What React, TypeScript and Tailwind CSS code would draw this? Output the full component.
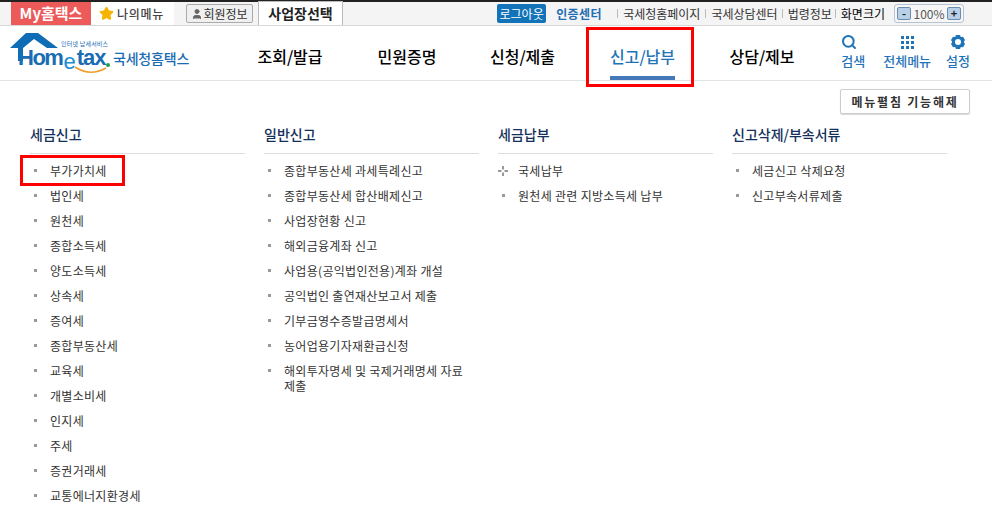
import React from 'react';
import { Search, Star, User } from 'lucide-react';

const columns = [
    {
        title: '세금신고',
        items: ['부가가치세', '법인세', '원천세', '종합소득세', '양도소득세', '상속세', '증여세', '종합부동산세', '교육세', '개별소비세', '인지세', '주세', '증권거래세', '교통에너지환경세'],
    },
    {
        title: '일반신고',
        items: ['종합부동산세 과세특례신고', '종합부동산세 합산배제신고', '사업장현황 신고', '해외금융계좌 신고', '사업용(공익법인전용)계좌 개설', '공익법인 출연재산보고서 제출', '기부금영수증발급명세서', '농어업용기자재환급신청', '해외투자명세 및 국제거래명세 자료 제출'],
    },
    {
        title: '세금납부',
        items: ['국세납부', '원천세 관련 지방소득세 납부'],
    },
    {
        title: '신고삭제/부속서류',
        items: ['세금신고 삭제요청', '신고부속서류제출'],
    },
];

const navItems = [
    { label: '조회/발급', width: 'w-[118px]' },
    { label: '민원증명', width: 'w-[116px]' },
    { label: '신청/제출', width: 'w-[115px]' },
    { label: '신고/납부', width: 'w-[125px]' },
    { label: '상담/제보', width: 'w-[114px]' },
];

function Logo() {
    return (
        <div className="relative w-[190px] h-[50px] ml-[10px] shrink-0">
            <svg width="50" height="30" viewBox="0 0 50 30" className="absolute left-0 top-[7px]">
                <path d="M0 15 L16 0 L28 0 L48 15 L37 15 L24 6 L13 15 L13 28 L8 28 L8 15 Z" fill="#0f6db5" />
            </svg>
            <div className="absolute left-[8px] top-[23px] text-[22px] leading-[18px] font-bold text-[#1a6cb3] font-['Liberation_Sans',sans-serif] flex whitespace-nowrap">
                <span className="tracking-[-1.5px]">Hom</span>
                <span className="font-normal text-[#1a8ccf] mt-[4px] ml-[1px]">e</span>
                <span className="tracking-[-1px] ml-[1px]">tax</span>
            </div>
            <div className="absolute left-[51px] top-[14px] text-[6px] leading-[8px] tracking-[0.2px] text-[#1a6cb3] whitespace-nowrap">인터넷 납세서비스</div>
            <span className="absolute left-[96px] top-[37px] w-[4px] h-[4px] rounded-full bg-[#1e9e4a]" />
            <svg width="34" height="10" viewBox="0 0 34 10" className="absolute left-[64px] top-[40px]">
                <path d="M1 1 Q16 11 32 2" fill="none" stroke="#f0a030" strokeWidth="1.6" />
            </svg>
            <div className="absolute left-[103px] top-[22px] text-[14px] leading-[20px] font-medium text-[#1a6cb3] tracking-[-0.2px] whitespace-nowrap">국세청홈택스</div>
        </div>
    );
}

function TopBar() {
    return (
        <div className="h-[26px] border-t-2 border-t-[#222] border-b border-b-[#d8d8d8] bg-[#f4f4f4] flex items-stretch text-[12px] text-[#333] shrink-0">
            <div className="ml-[11px] w-[80px] bg-[#ec5a5a] text-white font-bold text-[15px] flex items-center justify-center">My홈택스</div>
            <div className="w-[83px] bg-white flex items-center pl-[8px] gap-[3px] font-medium text-[#444] tracking-[0.7px]">
                <Star size={15} fill="#f5b400" stroke="#f5b400" />
                <span>나의메뉴</span>
            </div>
            <div className="ml-[12px] my-[2px] w-[67px] border border-[#aaa] rounded-[2px] bg-[#f0f0f0] flex items-center justify-center">
                <User size={12} fill="#666" stroke="#666" />
                <span>회원정보</span>
            </div>
            <div className="ml-[5px] mt-[-1px] w-[85px] border border-[#bbb] border-b-0 bg-white flex items-center justify-center font-bold text-[14px] text-[#222]">사업장선택</div>
            <div className="ml-auto flex items-center pr-[28px]">
                <div className="w-[49px] h-[19px] bg-[#1273b8] rounded-[2px] text-white flex items-center justify-center">로그아웃</div>
                <div className="ml-[10px] w-[49px] font-bold text-[#1f6fb2] tracking-[0.4px]">인증센터</div>
                <div className="ml-[12px] flex items-center gap-[5px]">
                    <i className="w-px h-[9px] bg-[#bbb]" />
                    <span>국세청홈페이지</span>
                    <i className="w-px h-[9px] bg-[#bbb]" />
                    <span>국세상담센터</span>
                    <i className="w-px h-[9px] bg-[#bbb] ml-[-1px]" />
                    <span>법령정보</span>
                    <i className="w-px h-[9px] bg-[#bbb] ml-[-2px]" />
                    <span className="text-black">화면크기</span>
                </div>
                <div className="ml-[9px] w-[70px] h-[19px] border border-[#b5c4d4] rounded-[3px] bg-[#f6f6f6] flex items-center justify-between px-[2px] text-[#555]">
                    <span className="w-[14px] h-[13px] bg-[#b8d0e8] border border-[#6c8cab] rounded-[2px] flex items-center justify-center leading-none text-[11px] font-bold text-[#222]">-</span>
                    <span className="text-[12px]">100%</span>
                    <span className="w-[14px] h-[13px] bg-[#b8d0e8] border border-[#6c8cab] rounded-[2px] flex items-center justify-center leading-none text-[11px] font-bold text-[#222]">+</span>
                </div>
            </div>
        </div>
    );
}

function Header() {
    return (
        <div className="h-[55px] border-b border-[#e3e3e3] flex items-start shrink-0">
            <Logo />
            <nav className="ml-[31px] flex">
                {navItems.map((item) => {
                    const active = item.label === '신고/납부';
                    return (
                        <div key={item.label} className={`relative h-[54px] flex justify-center ${item.width}`}>
                            <span className={`pt-[19px] text-[16px] leading-[22px] font-medium h-[54px] ${active ? 'text-[#1f74b8] border-b-4 border-[#4478b8]' : 'text-black'}`}>{item.label}</span>
                            {active && <div className="absolute left-[6px] top-[1px] w-[108px] h-[60px] border-[3px] border-[#ff0000]" />}
                        </div>
                    );
                })}
            </nav>
            <div className="ml-auto mr-[22px] mt-[8px] flex gap-[15px] text-[#1f74b8] text-[13px] font-medium">
                <div className="flex flex-col items-start mr-[3px]">
                    <Search size={16} strokeWidth={3} />
                    <span className="mt-[3px] leading-[16px]">검색</span>
                </div>
                <div className="flex flex-col items-center">
                    <svg width="16" height="16" viewBox="0 0 16 16" fill="#1f74b8">
                        {[2, 7, 12].map((y) => [2, 7, 12].map((x) => <rect key={`${x}-${y}`} x={x} y={y} width="3" height="3" />))}
                    </svg>
                    <span className="mt-[3px] leading-[16px]">전체메뉴</span>
                </div>
                <div className="flex flex-col items-center">
                    <svg width="16" height="16" viewBox="0 0 16 16">
                        <path d="M6 1 H10 L10.8 3 L13 2.8 L15 6 L13.8 8 L15 10 L13 13.2 L10.8 13 L10 15 H6 L5.2 13 L3 13.2 L1 10 L2.2 8 L1 6 L3 2.8 L5.2 3 Z" fill="#1f74b8" />
                        <circle cx="8" cy="8" r="3" fill="#ffffff" />
                    </svg>
                    <span className="mt-[3px] leading-[16px]">설정</span>
                </div>
            </div>
        </div>
    );
}

export default function App() {
    return (
        <div className="w-[992px] h-[522px] overflow-hidden bg-white flex flex-col font-['Noto_Sans_CJK_KR','Liberation_Sans',sans-serif]">
            <TopBar />
            <Header />
            <div className="flex justify-end pr-[22px] pt-[8px] shrink-0">
                <button className="w-[130px] h-[25px] border border-[#ccc] rounded-[2px] bg-white text-[12px] font-bold text-[#333] tracking-[1.8px] shadow-[0_1px_1px_rgba(0,0,0,0.15)]">메뉴펼침 기능해제</button>
            </div>
            <div className="flex gap-[19px] pl-[30px] mt-[10px]">
                {columns.map((col) => (
                    <div key={col.title} className="w-[215px]">
                        <div className="h-[30px] border-b border-[#ddd] text-[14px] leading-[20px] font-medium text-[#14305a]">{col.title}</div>
                        <ul className="mt-[4px]">
                            {col.items.map((item) => (
                                <li key={item} className="relative pl-[20px] pr-[12px] py-[5px] text-[12px] leading-[15px] tracking-[0.3px] text-[#333]">
                                    {item === '국세납부' ? (
                                        <svg width="10" height="10" viewBox="0 0 10 10" className="absolute left-0 top-[8px]">
                                            <path d="M4 0 H6 V3.5 H4 Z M4 6.5 H6 V10 H4 Z M0 4 H3.5 V6 H0 Z M6.5 4 H10 V6 H6.5 Z" fill="#999" />
                                        </svg>
                                    ) : (
                                        <span className="absolute left-[4px] top-[11px] w-[3px] h-[3px] bg-[#999]" />
                                    )}
                                    {item}
                                    {item === '부가가치세' && <span className="absolute left-[-10px] top-[-3px] w-[105px] h-[31px] border-[3px] border-[#ff0000]" />}
                                </li>
                            ))}
                        </ul>
                    </div>
                ))}
            </div>
        </div>
    );
}
